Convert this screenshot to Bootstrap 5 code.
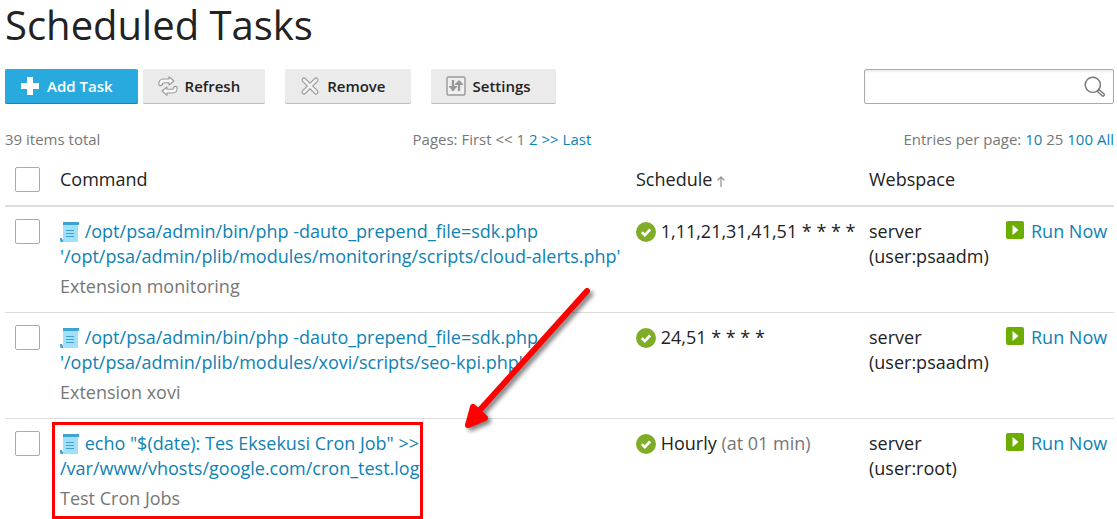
<!DOCTYPE html>
<html lang="en">
<head>
<meta charset="utf-8">
<meta name="viewport" content="width=device-width, initial-scale=1">
<title>Scheduled Tasks</title>
<link href="https://cdn.jsdelivr.net/npm/bootstrap@5.3.0/dist/css/bootstrap.min.css" rel="stylesheet">
<style>
body { font-family: "Open Sans", sans-serif; font-size: 18px; line-height: 25px; color: #222; background: #fff; }
a { color: #0d82b3; text-decoration: none; }
a:hover { text-decoration: underline; }
.page { padding: 0 3px 0 5px; }
.page-title { font-size: 40px; line-height: 49px; font-weight: 400; margin-bottom: 20px; }
.muted { color: #777; }
.toolbar { gap: 20px; }
.toolbar-pair { gap: 5px; }
.tool-btn { display: inline-flex; align-items: center; gap: 7px; height: 35px; padding: 0 25px 1px 15px; font-size: 15px; font-weight: 600; line-height: 20px; color: #222; background: #ebebeb; border: 0; border-radius: 2px; box-shadow: inset 0 -1px 0 #bdbdbd; }
.tool-btn:hover { background: #e0e0e0; color: #222; }
.tool-add { color: #fff; background: #28aade; box-shadow: inset 0 -1px 0 #1b86b3; }
.tool-add:hover { color: #fff; background: #1f9cce; }
.search-box { width: 250px; }
.search-input { height: 35px; padding: 4px 36px 4px 8px; border: 1px solid #aaa; border-radius: 2px; box-shadow: inset 0 2px 2px #eee; }
.search-btn { right: 9px; top: 7px; line-height: 0; }
.pager { font-size: 15px; line-height: 20px; margin-top: 25px; margin-bottom: 5px; }
.tasks { table-layout: fixed; }
.tasks th, .tasks td { padding: 12px 10px; vertical-align: top; font-weight: 400; }
.tasks td { padding-bottom: 13px; }
.tasks thead th { padding-top: 13px; padding-bottom: 13px; }
.tasks thead tr { border-bottom: 2px solid #ddd; }
.tasks tbody tr { border-bottom: 1px solid #ddd; }
.tasks tbody tr:last-child { border-bottom: 0; }
.tasks tbody tr:last-child td { padding-bottom: 8px; }
.col-check { width: 45px; }
.col-schedule { width: 233px; }
.col-space { width: 137px; }
.col-run { width: 118px; }
.tasks .form-check-input { display: block; width: 25px; height: 25px; margin: 0; border: 1px solid #aaa; border-radius: 2px; }
.task-note { margin-top: 5px; }
.ico { width: 20px; height: 20px; vertical-align: -4px; }
.run-link { display: flex; gap: 7px; }
.run-link svg { width: 18px; height: 18px; margin-top: 2px; flex-shrink: 0; }
.mark-frame { inset: -9px -4px -8px -8px; border: 3px solid #f00; pointer-events: none; }
.mark-arrow { left: 395px; top: -151px; pointer-events: none; filter: drop-shadow(3px 3px 2px rgba(0,0,0,.5)); }
</style>
</head>
<body>
<svg class="d-none" aria-hidden="true">
  <symbol id="i-script" viewBox="0 0 20 20">
    <path d="M3 1h15v19H3z" fill="#9fe0fa"/>
    <path d="M3 0h16v3H3z" fill="#41a2cf"/>
    <path d="M0 16h2v1.500h1V20H1.500Q0 20 0 18z" fill="#41a2cf"/>
    <path d="M6 8.500h8M6 11.500h8M6 14.500h8" stroke="#41a2cf" stroke-width="1"/>
  </symbol>
  <symbol id="i-ok" viewBox="0 0 20 20">
    <circle cx="10" cy="10" r="10" fill="#80ad27"/>
    <path d="M5.800 10.200l3 3 5.300-5.700" fill="none" stroke="#fff" stroke-width="2.600"/>
  </symbol>
  <symbol id="i-run" viewBox="0 0 18 18">
    <rect width="18" height="18" rx="2" fill="#6cae00"/>
    <path d="M6.500 4l6 5-6 5z" fill="#fff"/>
  </symbol>
</svg>

<main class="page">
  <h1 class="page-title">Scheduled Tasks</h1>

  <div class="d-flex justify-content-between">
    <div class="toolbar d-flex">
      <div class="toolbar-pair d-flex">
        <button type="button" class="tool-btn tool-add">
          <svg width="20" height="20" viewBox="0 0 20 20"><path d="M7 1h6v6h6v6h-6v6H7v-6H1V7h6z" fill="#fff"/></svg>
          Add Task</button>
        <button type="button" class="tool-btn">
          <svg width="20" height="20" viewBox="0 0 20 20" fill="#f6f6f6" stroke="#999" stroke-width="1.100" stroke-linejoin="round"><path d="M1 9Q0 3 6 3h5V.700L16 5l-5 4V6.700H7Q4 6.700 4.500 8.500 2.500 10.500 1 9z"/><path d="M19 11q1 6-5 6H9v2.300L4 15l5-4v2.300h4q3 0 2.500-1.800 2-2 3.500-.500z"/></svg>
          Refresh</button>
      </div>
      <button type="button" class="tool-btn">
        <svg width="20" height="20" viewBox="0 0 20 20" fill="none" stroke-linecap="round"><path d="M4 4l12 12M16 4L4 16" stroke="#999" stroke-width="5"/><path d="M4 4l12 12M16 4L4 16" stroke="#f2f2f2" stroke-width="2.800"/></svg>
        Remove</button>
      <button type="button" class="tool-btn">
        <svg width="20" height="20" viewBox="0 0 20 20" fill="none" stroke="#999"><rect x="1" y="1" width="18" height="18" rx="1" fill="#f0f0f0" stroke-width="1.400"/><path d="M7 4v11M13 5v10" stroke-width="2.400"/><path d="M3 10h8v1l-4 4-4-4zM9 9h8V8l-4-4-4 4z" fill="#999" stroke="none"/></svg>
        Settings</button>
    </div>
    <div class="search-box position-relative">
      <input type="search" class="form-control search-input" aria-label="Search tasks">
      <button type="button" class="search-btn btn p-0 border-0 position-absolute" aria-label="Search">
        <svg width="21" height="21" viewBox="0 0 21 21" fill="none" stroke="#777" stroke-width="1.400"><circle cx="8.800" cy="8.800" r="7.600"/><path d="M13.200 15.200l1.800-1.800 5 4.600q.800 1-.200 1.800-.900.800-1.700 0z"/></svg>
      </button>
    </div>
  </div>

  <div class="pager muted d-flex justify-content-between">
    <div>39 items total</div>
    <nav aria-label="Pages">Pages: First &lt;&lt; 1 <a href="#">2</a> <a href="#">&gt;&gt;</a> <a href="#">Last</a></nav>
    <div>Entries per page: <a href="#">10</a> 25 <a href="#">100</a> <a href="#">All</a></div>
  </div>

  <table class="tasks w-100">
    <thead>
      <tr>
        <th class="col-check" scope="col"><input type="checkbox" class="form-check-input" aria-label="Select all"></th>
        <th scope="col">Command</th>
        <th class="col-schedule" scope="col">Schedule <svg width="8" height="11" viewBox="0 0 8 11" fill="none" stroke="#999" stroke-width="1.300"><path d="M4 11V1M.500 4.500L4 1l3.500 3.500"/></svg></th>
        <th class="col-space" scope="col">Webspace</th>
        <td class="col-run"></td>
      </tr>
    </thead>
    <tbody>
      <tr>
        <td><input type="checkbox" class="form-check-input" aria-label="Select monitoring task"></td>
        <td class="text-nowrap">
          <a href="#"><svg class="ico"><use href="#i-script"/></svg> /opt/psa/admin/bin/php -dauto_prepend_file=sdk.php<br>'/opt/psa/admin/plib/modules/monitoring/scripts/cloud-alerts.php'</a>
          <div class="task-note muted">Extension monitoring</div>
        </td>
        <td class="text-nowrap"><svg class="ico"><use href="#i-ok"/></svg> 1,11,21,31,41,51 * * * *</td>
        <td>server (user:psaadm)</td>
        <td class="text-nowrap"><a href="#" class="run-link"><svg><use href="#i-run"/></svg>Run Now</a></td>
      </tr>
      <tr>
        <td><input type="checkbox" class="form-check-input" aria-label="Select xovi task"></td>
        <td class="text-nowrap">
          <a href="#"><svg class="ico"><use href="#i-script"/></svg> /opt/psa/admin/bin/php -dauto_prepend_file=sdk.php<br>'/opt/psa/admin/plib/modules/xovi/scripts/seo-kpi.php'</a>
          <div class="task-note muted">Extension xovi</div>
        </td>
        <td class="text-nowrap"><svg class="ico"><use href="#i-ok"/></svg> 24,51 * * * *</td>
        <td>server (user:psaadm)</td>
        <td class="text-nowrap"><a href="#" class="run-link"><svg><use href="#i-run"/></svg>Run Now</a></td>
      </tr>
      <tr>
        <td><input type="checkbox" class="form-check-input" aria-label="Select test task"></td>
        <td class="text-nowrap">
          <div class="position-relative d-inline-block align-top">
            <a href="#"><svg class="ico"><use href="#i-script"/></svg> echo "$(date): Tes Eksekusi Cron Job" &gt;&gt;<br>/var/www/vhosts/google.com/cron_test.log</a>
            <div class="task-note muted">Test Cron Jobs</div>
            <div class="mark-frame position-absolute"></div>
            <svg class="mark-arrow position-absolute" width="150" height="160" viewBox="0 0 150 160" fill="#f00" stroke="#f00" stroke-width="6" stroke-linecap="round" stroke-linejoin="round"><path d="M132 11L24 131"/><path d="M18 127L13 145 30 138z"/></svg>
          </div>
        </td>
        <td class="text-nowrap"><svg class="ico"><use href="#i-ok"/></svg> Hourly <span class="muted">(at 01 min)</span></td>
        <td>server (user:root)</td>
        <td class="text-nowrap"><a href="#" class="run-link"><svg><use href="#i-run"/></svg>Run Now</a></td>
      </tr>
    </tbody>
  </table>
</main>
<script src="https://cdn.jsdelivr.net/npm/bootstrap@5.3.0/dist/js/bootstrap.bundle.min.js"></script>
</body>
</html>
